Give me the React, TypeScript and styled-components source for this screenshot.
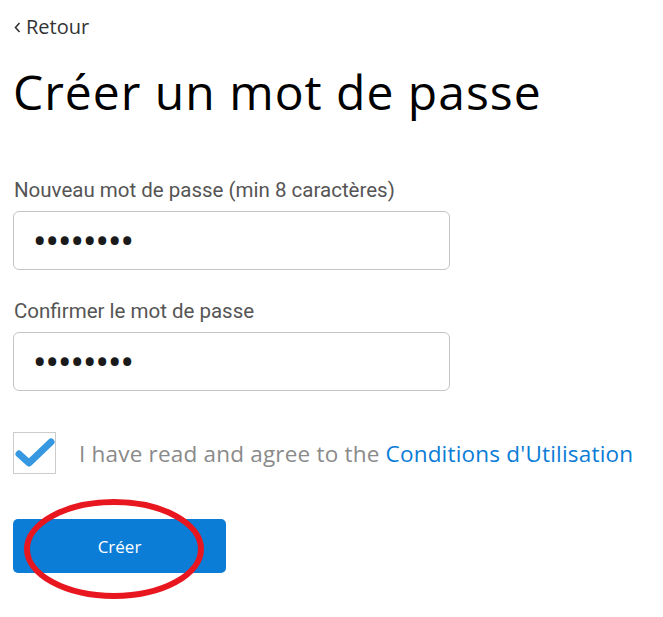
import React from 'react';
import styled, { createGlobalStyle } from 'styled-components';

const GlobalStyle = createGlobalStyle`
    html, body {
        margin: 0;
        padding: 0;
        background: #ffffff;
    }
    * {
        box-sizing: border-box;
    }
`;

const Page = styled.div`
    padding: 15px 13px 40px 13px;
    font-family: 'Open Sans', sans-serif;
`;

const BackLink = styled.a`
    display: inline-flex;
    align-items: center;
    gap: 5px;
    color: #333333;
    font-size: 20px;
    line-height: 24px;
    text-decoration: none;
    padding-left: 1px;
`;

const Title = styled.h1`
    margin: 25px 0 0 0;
    font-family: 'Open Sans', sans-serif;
    font-weight: 400;
    font-size: 48px;
    letter-spacing: 1px;
    line-height: 56px;
    color: #000000;
`;

const Form = styled.form`
    display: flex;
    flex-direction: column;
    margin-top: 58px;
`;

const Field = styled.div`
    display: flex;
    flex-direction: column;
    gap: 9px;
    margin-bottom: 29px;
`;

const Label = styled.label`
    font-family: 'Roboto', sans-serif;
    font-size: 20.5px;
    line-height: 24px;
    color: #555555;
    padding-left: 1px;
`;

const PasswordInput = styled.input`
    width: 437px;
    height: 59px;
    border: 1px solid #c4c4c4;
    border-radius: 6px;
    padding: 4px 22px 0 19px;
    font-family: 'Roboto', sans-serif;
    font-size: 40px;
    letter-spacing: -1px;
    color: #1a1a1a;
    outline: none;
`;

const AgreeRow = styled.div`
    display: flex;
    align-items: center;
    gap: 23px;
    margin-top: 12px;
`;

const CheckBox = styled.span`
    display: flex;
    align-items: center;
    justify-content: center;
    width: 43px;
    height: 42px;
    border: 1px solid #cccccc;
    background: #ffffff;
`;

const AgreeText = styled.span`
    font-family: 'Open Sans', sans-serif;
    font-size: 22.5px;
    letter-spacing: 0.2px;
    color: #8a8a8a;
`;

const TermsLink = styled.a`
    color: #0a7cd6;
    text-decoration: none;
`;

const ButtonWrap = styled.div`
    position: relative;
    width: 213px;
    margin-top: 45px;
`;

const SubmitButton = styled.button`
    width: 213px;
    height: 54px;
    border: none;
    border-radius: 5px;
    background: #0b7dd7;
    color: #ffffff;
    font-family: 'Open Sans', sans-serif;
    font-size: 17px;
    cursor: pointer;
`;

const Circle = styled.svg`
    position: absolute;
    left: 9px;
    top: -22px;
    pointer-events: none;
`;

export default function App() {
    return (
        <>
            <GlobalStyle />
            <Page>
                <BackLink href="#">
                    <svg width="7" height="11" viewBox="0 0 7 11">
                        <path d="M5.5 1 L1.5 5.5 L5.5 10" fill="none" stroke="#333" strokeWidth="1.6" />
                    </svg>
                    Retour
                </BackLink>
                <Title>Créer un mot de passe</Title>
                <Form onSubmit={e => e.preventDefault()}>
                    <Field>
                        <Label htmlFor="pw">Nouveau mot de passe (min 8 caractères)</Label>
                        <PasswordInput id="pw" type="password" defaultValue="motdepas" readOnly />
                    </Field>
                    <Field>
                        <Label htmlFor="pw2">Confirmer le mot de passe</Label>
                        <PasswordInput id="pw2" type="password" defaultValue="motdepas" readOnly />
                    </Field>
                    <AgreeRow>
                        <CheckBox>
                            <svg width="40" height="30" viewBox="0 0 40 30">
                                <path
                                    d="M4 16 L14 25 L36 4"
                                    fill="none"
                                    stroke="#3598e0"
                                    strokeWidth="7"
                                    strokeLinecap="round"
                                    strokeLinejoin="round"
                                />
                            </svg>
                        </CheckBox>
                        <AgreeText>
                            I have read and agree to the <TermsLink href="#">Conditions d'Utilisation</TermsLink>
                        </AgreeText>
                    </AgreeRow>
                    <ButtonWrap>
                        <SubmitButton type="submit">Créer</SubmitButton>
                        <Circle width="190" height="106" viewBox="0 0 190 106">
                            <ellipse cx="92" cy="52" rx="87" ry="47" fill="none" stroke="#e8161f" strokeWidth="6" />
                        </Circle>
                    </ButtonWrap>
                </Form>
            </Page>
        </>
    );
}
